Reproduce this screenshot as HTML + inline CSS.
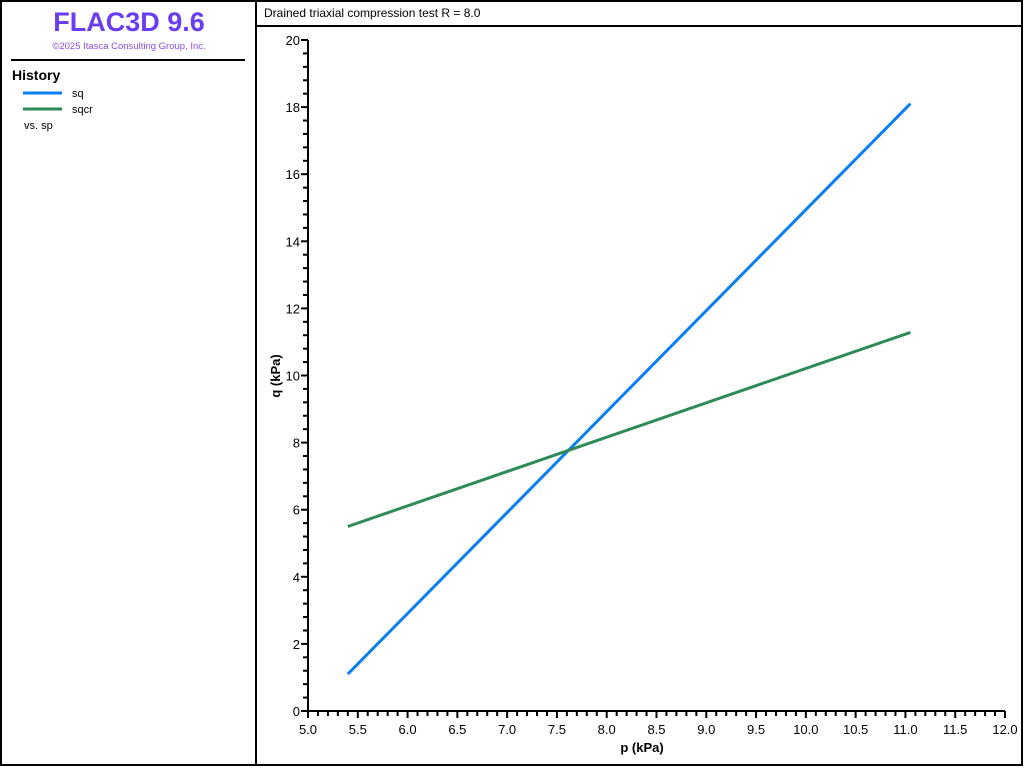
<!DOCTYPE html>
<html><head><meta charset="utf-8"><style>
html,body{margin:0;padding:0;background:#fff;}
svg{display:block;font-family:"Liberation Sans","DejaVu Sans",sans-serif;}
</style></head><body>
<svg id="s" width="1024" height="768" viewBox="0 0 1024 768" xmlns="http://www.w3.org/2000/svg">
<rect x="0" y="0" width="1024" height="768" fill="#fff"/>
<rect x="1" y="1" width="1021" height="764" fill="none" stroke="#000" stroke-width="2"/>
<line x1="256" y1="0" x2="256" y2="766" stroke="#000" stroke-width="2"/>
<line x1="256" y1="26" x2="1022" y2="26" stroke="#000" stroke-width="2"/>
<text x="129" y="31" text-anchor="middle" font-size="27" font-weight="bold" fill="#6a3cf5">FLAC3D 9.6</text>
<text x="129" y="49" text-anchor="middle" font-size="9.5" fill="#8a4cf0">©2025 Itasca Consulting Group, Inc.</text>
<line x1="11" y1="60" x2="245" y2="60" stroke="#000" stroke-width="2"/>
<text x="12" y="80" font-size="14" font-weight="bold" fill="#000">History</text>
<line x1="23" y1="93" x2="62" y2="93" stroke="#0a7ef2" stroke-width="3"/>
<text x="72" y="97" font-size="11" fill="#000">sq</text>
<line x1="23" y1="109" x2="62" y2="109" stroke="#2e8b57" stroke-width="3"/>
<text x="72" y="113" font-size="11" fill="#000">sqcr</text>
<text x="24" y="129" font-size="11" fill="#000">vs. sp</text>
<text x="264" y="17" font-size="12" fill="#000">Drained triaxial compression test R = 8.0</text>
<g id="ax" stroke="#000" stroke-width="2"></g>
<g id="lab" font-size="13" fill="#000"></g>
<text x="642" y="752" text-anchor="middle" font-size="13" font-weight="bold">p (kPa)</text>
<text transform="translate(280,376) rotate(-90)" text-anchor="middle" font-size="13" font-weight="bold">q (kPa)</text>
<line x1="347.8" y1="674.1" x2="910.4" y2="103.7" stroke="#0a7ef2" stroke-width="3"/>
<line x1="347.8" y1="526.5" x2="910.4" y2="332.4" stroke="#2e8b57" stroke-width="3"/>
</svg>
<script>
var ns="http://www.w3.org/2000/svg",ax=document.getElementById("ax"),lab=document.getElementById("lab");
function L(a,b,c,d){var l=document.createElementNS(ns,"line");l.setAttribute("x1",a);l.setAttribute("y1",b);l.setAttribute("x2",c);l.setAttribute("y2",d);ax.appendChild(l);}
function T(x,y,s,an){var t=document.createElementNS(ns,"text");t.setAttribute("x",x);t.setAttribute("y",y);t.setAttribute("text-anchor",an);t.textContent=s;lab.appendChild(t);}
var x0=308,x1=1005,y0=711,y1=40;
L(x0,y0,x1,y0);L(x0,y1,x0,y0);
for(var i=0;i<=70;i++){var x=x0+(x1-x0)*i/70;var big=i%5==0;L(x,y0,x,y0+(big?7:5));if(big)T(x,734,(5+i/10).toFixed(1),"middle");}
for(var j=0;j<=50;j++){var y=y0-(y0-y1)*j/50;var big=j%5==0;L(x0,y,x0-(big?7:5),y);if(big)T(x0-8,y+5,String(j*0.4),"end");}
</script>
</body></html>
